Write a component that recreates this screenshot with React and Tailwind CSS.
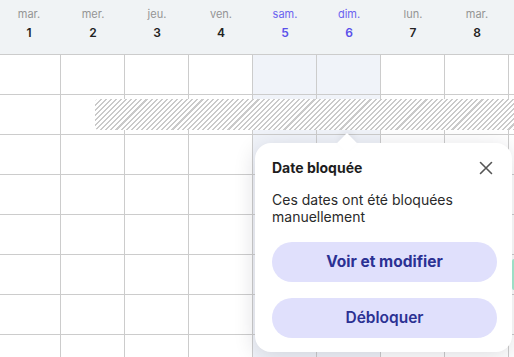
const days = [
  { name: "mar.", num: "1" },
  { name: "mer.", num: "2" },
  { name: "jeu.", num: "3" },
  { name: "ven.", num: "4" },
  { name: "sam.", num: "5", weekend: true },
  { name: "dim.", num: "6", weekend: true },
  { name: "lun.", num: "7" },
  { name: "mar.", num: "8" },
  { name: "", num: "" },
];

const rows = [0, 1, 2, 3, 4, 5, 6, 7];

const App = () => {
  return (
    <div className="relative w-[514px] h-[357px] overflow-hidden bg-white font-['Inter',sans-serif]">
      {/* header */}
      <div className="flex ml-[-3px] h-[55px] bg-[#f0f3f5] border-b border-[#cccccc]">
        {days.map((d, i) => (
          <div key={i} className="w-[64px] shrink-0 flex flex-col items-center pt-[6px]">
            <span className={`text-[11px] leading-[16px] ${d.weekend ? "text-[#6b63f0]" : "text-[#949494]"}`}>
              {d.name}
            </span>
            <span className={`mt-[3px] text-[12px] leading-[16px] font-semibold ${d.weekend ? "text-[#5a50ea]" : "text-[#222]"}`}>
              {d.num}
            </span>
          </div>
        ))}
      </div>

      {/* grid */}
      {rows.map((r) => (
        <div key={r} className="flex ml-[-3px] h-[40px] border-b border-[#cccccc]">
          {days.map((d, i) => (
            <div
              key={i}
              className={`w-[64px] shrink-0 border-r border-[#cccccc] ${d.weekend ? "bg-[#f0f3f9]" : ""}`}
            />
          ))}
        </div>
      ))}

      {/* blocked bar */}
      <div className="absolute left-[95px] top-[99px] h-[31px] right-[-10px] rounded-l-[4px] bg-[repeating-linear-gradient(135deg,#cacaca_0px,#cacaca_1.5px,#ffffff_1.5px,#ffffff_3.6px)]" />

      {/* green event peeking */}
      <div className="absolute left-[512px] top-[259px] w-[6px] h-[31px] bg-[#a7ecd1] rounded-l-[2px]" />

      {/* popover */}
      <div className="absolute left-[255px] top-[143px] w-[257px] h-[209px] bg-white rounded-[16px] shadow-[0_4px_22px_rgba(20,20,40,0.14)] pl-[17px] pr-[15px] pt-[15px]">
        <div className="absolute left-[85px] top-[-7px] w-[14px] h-[14px] bg-white rotate-45 shadow-[-3px_-3px_6px_rgba(20,20,40,0.05)]" />
        <div className="relative flex items-center justify-between">
          <span className="text-[14px] leading-[20px] font-bold text-[#1d1d1d]">Date bloquée</span>
          <svg width="14" height="14" viewBox="0 0 14 14" className="mr-[4px]">
            <path d="M1.5 1.5 L12.5 12.5 M12.5 1.5 L1.5 12.5" stroke="#555" strokeWidth="1.6" strokeLinecap="round" />
          </svg>
        </div>
        <p className="relative mt-[13px] text-[14px] leading-[17px] text-[#2a2a2a]">
          Ces dates ont été bloquées manuellement
        </p>
        <div className="relative mt-[17px] flex flex-col gap-[16px]">
          <button className="h-[40px] w-full rounded-full bg-[#e0e0fc] text-[15.5px] font-bold text-[#2b3193]">
            Voir et modifier
          </button>
          <button className="h-[40px] w-full rounded-full bg-[#e0e0fc] text-[15.5px] font-semibold text-[#2b3193]">
            Débloquer
          </button>
        </div>
      </div>
    </div>
  );
};

export default App;
